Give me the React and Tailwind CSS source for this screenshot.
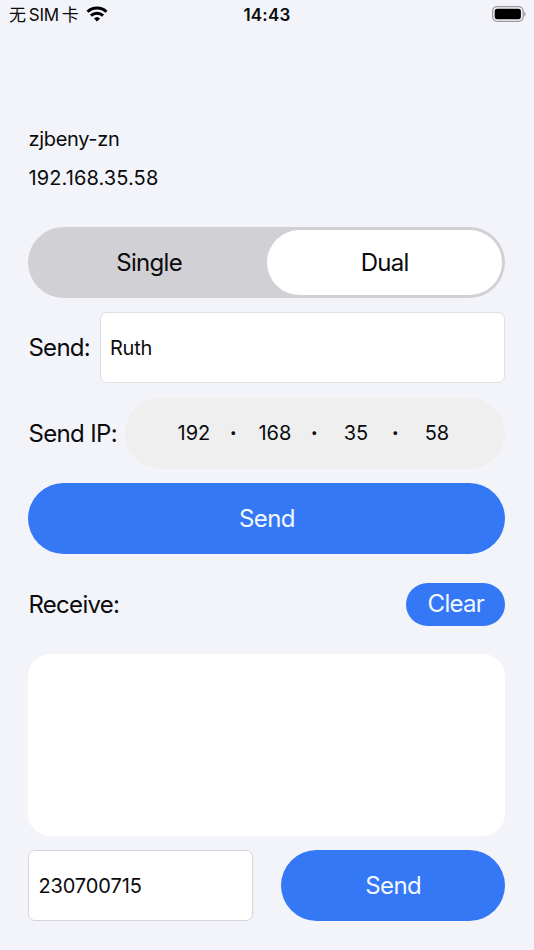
import { useState } from 'react';

const ipParts = ['192', '168', '35', '58'];

function StatusBar() {
  return (
    <header className="grid h-[30px] grid-cols-3 items-start pl-[9px] pr-[8px]">
      <div className="flex items-start gap-[7px]">
        <span className="whitespace-nowrap text-[17px] leading-[30px] tracking-[-0.3px] [word-spacing:-1.4px]">无 SIM 卡</span>
        <svg className="mt-[6px]" width="22" height="16" viewBox="0 0 22 16" fill="none" stroke="#000" strokeWidth="2.9">
          <path d="M1.5 5.7a13.9 13.9 0 0 1 19 0" />
          <path d="M4.9 9.6a8.9 8.9 0 0 1 12.2 0" />
          <path d="M11 15.2 8.4 12.6a3.9 3.9 0 0 1 5.2 0z" fill="#000" strokeWidth="0.8" strokeLinejoin="round" />
        </svg>
      </div>
      <span className="-ml-px text-center text-[17px] font-semibold leading-[30px] tracking-[0.2px]">14:43</span>
      <svg className="mt-[6px] justify-self-end" width="34" height="16" viewBox="0 0 34 16">
        <rect x="0.7" y="0.7" width="30.4" height="14.6" rx="4.2" fill="none" stroke="#9b9b9f" strokeWidth="1.3" />
        <rect x="2.7" y="2.7" width="26.2" height="10.6" rx="2.4" fill="#000" />
        <path d="M32.2 5.4c1.8.8 1.8 4.4 0 5.2z" fill="#9b9b9f" />
      </svg>
    </header>
  );
}

export default function App() {
  const [mode, setMode] = useState('Dual');
  const [received, setReceived] = useState('');

  return (
    <div className="h-[950px] w-[534px] bg-[#f3f4f9] font-[Inter,'Noto_Sans_CJK_SC',sans-serif] text-[#0b0b0d]">
      <StatusBar />

      <main className="pl-[28.4px] pr-[28.6px] pt-[90px]">
        {/* Network info */}
        <div className="text-[20px] leading-[38.5px]">
          <p className="tracking-[-0.3px]">zjbeny-zn</p>
          <p className="tracking-[0.12px]">192.168.35.58</p>
        </div>

        {/* Mode */}
        <div className="mt-[29.5px] flex h-[71px] rounded-full bg-[#d1d0d5] p-[3px]">
          {['Single', 'Dual'].map((item) => (
            <button
              key={item}
              onClick={() => setMode(item)}
              className={`flex-1 rounded-full pt-px text-[24px] tracking-[-0.7px] ${mode === item ? 'bg-white' : ''}`}
            >
              {item}
            </button>
          ))}
        </div>

        <div className="mt-[14.5px] flex h-[71px] items-center">
          <label className="w-[71.5px] pt-px text-[24px] tracking-[-0.7px]">Send:</label>
          <input
            defaultValue="Ruth"
            className="h-full min-w-0 flex-1 rounded-[7px] border border-[#dedee3] bg-white px-[9px] text-[20px] tracking-[-0.2px]"
          />
        </div>

        <div className="mt-[14.5px] flex h-[71px] items-center">
          <label className="w-[97px] whitespace-nowrap pt-px text-[24px] tracking-[-0.65px]">Send IP:</label>
          <div className="flex h-full flex-1 items-center justify-center rounded-full bg-[#efefef] text-[20px]">
            {ipParts.map((part, index) => (
              <div key={index} className="flex items-center">
                {index > 0 && <span className="w-[20px] pr-[2px] text-center font-extrabold">·</span>}
                <span className="w-[61px] text-center">{part}</span>
              </div>
            ))}
          </div>
        </div>

        <button className="mt-[14.5px] h-[71px] w-full rounded-full bg-[#3478f6] pt-px text-[24px] tracking-[-0.6px] text-[#f3f7ff]">
          Send
        </button>

        {/* Receive */}
        <div className="mt-[28.5px] flex h-[43px] items-center justify-between">
          <span className="pt-px text-[24px] tracking-[-0.7px]">Receive:</span>
          <button
            onClick={() => setReceived('')}
            className="h-full w-[99px] rounded-full bg-[#3478f6] text-[24px] tracking-[-0.7px] text-[#f3f7ff]"
          >
            Clear
          </button>
        </div>
        <div className="mt-[28px] h-[182px] rounded-[22px] bg-white p-3 text-[20px]">{received}</div>

        <div className="mt-[14px] grid h-[71px] grid-cols-2 gap-[28px]">
          <input
            defaultValue="230700715"
            className="min-w-0 rounded-[7px] border border-[#d5d5da] bg-white px-[9px] pt-[2px] text-[20px] tracking-[-0.1px]"
          />
          <button className="rounded-full bg-[#3478f6] pt-[2px] text-[24px] tracking-[-0.6px] text-[#f3f7ff]">Send</button>
        </div>
      </main>
    </div>
  );
}
